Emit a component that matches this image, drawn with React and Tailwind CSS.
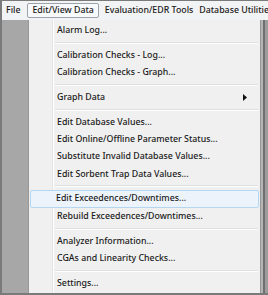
import { Fragment } from 'react'

const items = [
  { label: 'Alarm Log...' },
  'sep',
  { label: 'Calibration Checks - Log...' },
  { label: 'Calibration Checks - Graph...' },
  'sep',
  { label: 'Graph Data', sub: true },
  'sep',
  { label: 'Edit Database Values...' },
  { label: 'Edit Online/Offline Parameter Status...' },
  { label: 'Substitute Invalid Database Values...' },
  { label: 'Edit Sorbent Trap Data Values...' },
  'sep',
  { label: 'Edit Exceedences/Downtimes...', hot: true },
  { label: 'Rebuild Exceedences/Downtimes...' },
  'sep',
  { label: 'Analyzer Information...' },
  { label: 'CGAs and Linearity Checks...' },
  'sep',
  { label: 'Settings...' },
]

function MenuRow({ item }) {
  if (item === 'sep') {
    return (
      <div className="h-[7.4px] flex flex-col justify-center pl-[26px] pr-[2px]">
        <div className="h-px bg-[#e0e0e0]" />
        <div className="h-px bg-white" />
      </div>
    )
  }
  return (
    <div
      className={
        item.hot
          ? 'h-[17.4px] flex items-center pl-[25px] pr-[10px] mx-[1px] border border-[#b4d6f3] rounded-[2px] bg-[#edf3fb]'
          : 'h-[17.4px] flex items-center pl-[26px] pr-[10px] mx-[1px] border border-transparent'
      }
    >
      <span className="flex-1 whitespace-nowrap">{item.label}</span>
      {item.sub && (
        <svg width="4" height="7" viewBox="0 0 4 7" className="mr-[1px]">
          <path d="M0 0 L4 3.5 L0 7 Z" fill="#111" />
        </svg>
      )}
    </div>
  )
}

export default function App() {
  return (
    <div
      className="w-[268px] h-[295px] overflow-hidden border-l-2 border-t border-b-2 border-[#7a7a7a] bg-[#a7a7a7] flex flex-col text-[#1a1a1a] text-[8.8px] font-medium leading-none"
      style={{ fontFamily: '"Noto Sans", "Open Sans", sans-serif' }}
    >
      <div className="h-[19px] bg-[#f2f3f4] flex items-center whitespace-nowrap shrink-0">
        <div className="px-[3px] ml-[1px]">File</div>
        <div className="ml-[4px] h-[15px] px-[4px] flex items-center border border-[#9aa3ad] rounded-[2px] bg-[#f8f9fa]">
          Edit/View Data
        </div>
        <div className="ml-[5px] px-[1px]">Evaluation/EDR Tools</div>
        <div className="ml-[4px] px-[1px]">Database Utilities</div>
      </div>
      <div className="flex-1 flex min-h-0">
        <div className="w-[26px] shrink-0" />
        <div className="w-[233px] shrink-0 bg-[#f0f0f0] border-x border-[#979797] relative pt-[1.5px]">
          <div className="absolute left-[23px] top-0 bottom-0 w-[2px] flex">
            <div className="w-px bg-[#e2e3e3]" />
            <div className="w-px bg-white" />
          </div>
          <div className="relative">
            {items.map((item, i) => (
              <Fragment key={i}>
                <MenuRow item={item} />
              </Fragment>
            ))}
          </div>
        </div>
        <div className="flex-1 flex">
          <div className="w-[2px] bg-[#b5b5b5]" />
          <div className="w-[2px] bg-[#6f6f6f]" />
          <div className="flex-1 bg-[#9c9c9c]" />
        </div>
      </div>
    </div>
  )
}
